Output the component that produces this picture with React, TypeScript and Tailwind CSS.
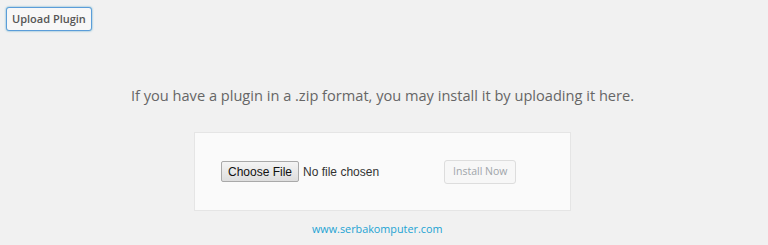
export default function App() {
  return (
    <div
      className="relative h-[245px] w-[768px] overflow-hidden bg-[#f1f1f1]"
      style={{ fontFamily: '"Open Sans", sans-serif' }}
    >
      <div className="px-[6px] pt-[5px]">
        <button className="h-[24px] rounded-[3px] border border-[#5b9dd9] bg-[#f7f7f7] px-[5px] text-[11px] font-semibold text-[#555] shadow-[0_0_2px_rgba(30,140,190,0.8)]">
          Upload Plugin
        </button>
      </div>

      <p className="mt-[54px] pr-[3px] text-center text-[14.6px] leading-[20px] text-[#666]">
        If you have a plugin in a .zip format, you may install it by uploading it here.
      </p>

      <div className="ml-[194px] mt-[27px] flex h-[79px] w-[377px] items-center border border-[#e5e5e5] bg-[#fafafa] pl-[26px]">
        <div className="flex items-center" style={{ fontFamily: '"Liberation Sans", Arial, sans-serif' }}>
          <span className="flex h-[21px] items-center rounded-[2px] border border-[#a9a9a9] bg-[linear-gradient(#f4f4f4,#dedede)] px-[6px] text-[12px] text-[#111]">
            Choose File
          </span>
          <span className="ml-[4px] text-[12px] text-[#333]">No file chosen</span>
        </div>
        <button className="ml-[65px] h-[24px] rounded-[3px] border border-[#ddd] bg-[#f7f7f7] px-[8px] text-[10.5px] text-[#a0a5aa]">
          Install Now
        </button>
      </div>

      <div className="mt-[10px] pl-[312px] text-[10.8px] leading-[16px] text-[#22a3d3]">www.serbakomputer.com</div>
    </div>
  );
}
